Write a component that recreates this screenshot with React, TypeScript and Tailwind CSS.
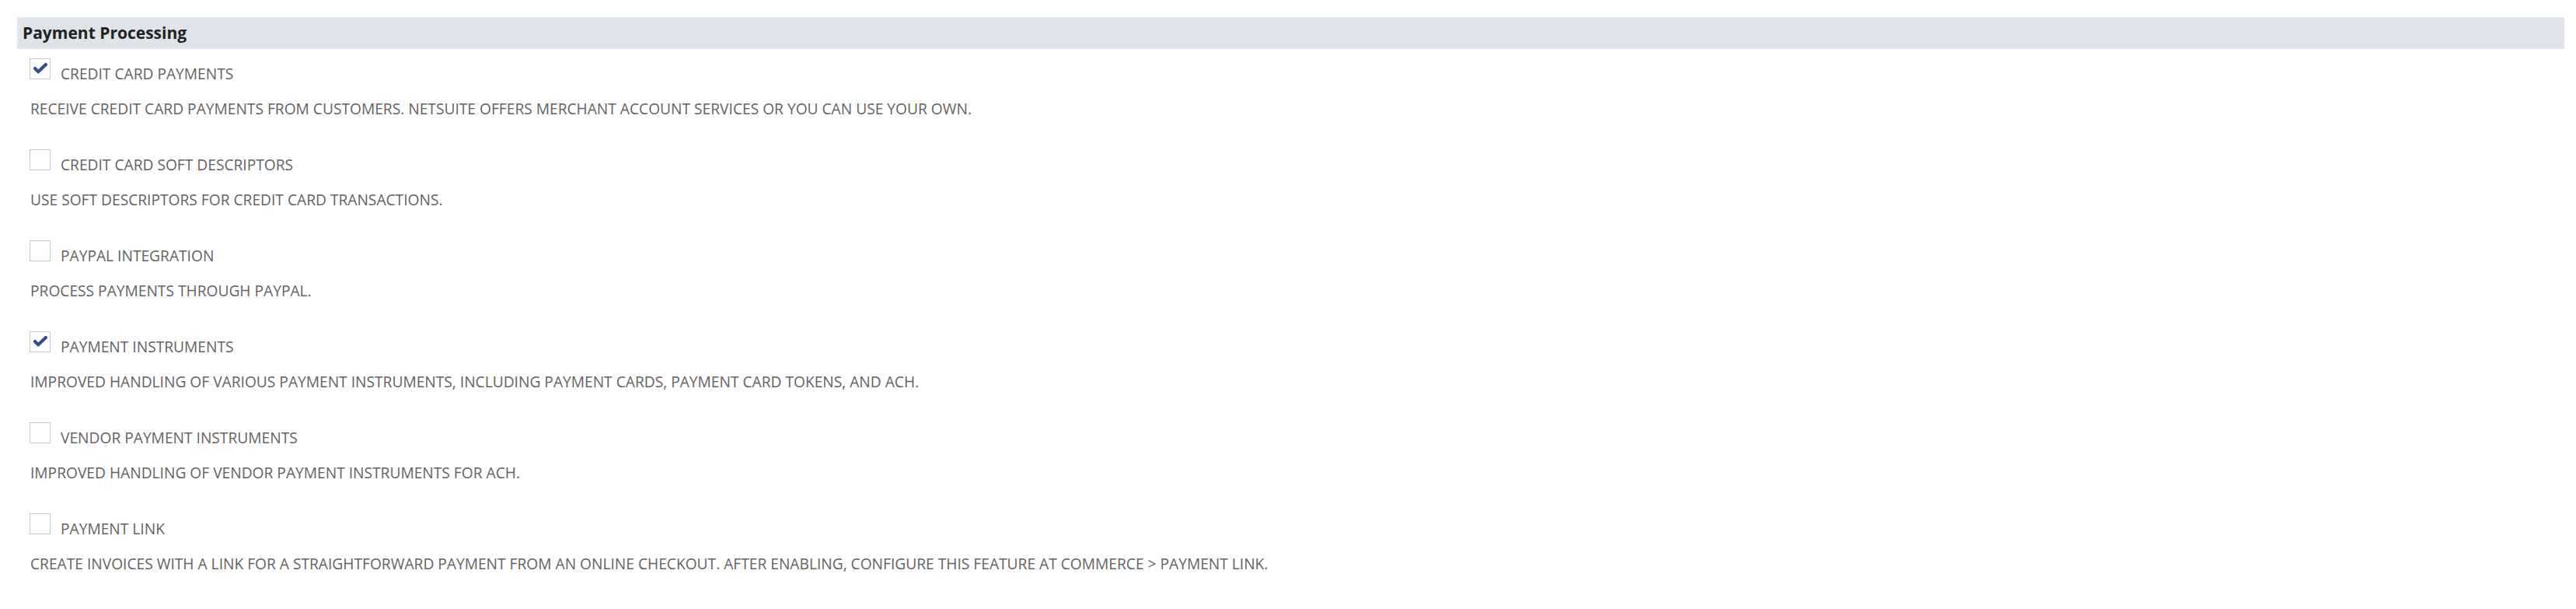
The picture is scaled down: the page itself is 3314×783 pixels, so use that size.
// Payment Processing feature list (NetSuite-style settings block)

const features = [
  {
    label: 'CREDIT CARD PAYMENTS',
    desc: 'RECEIVE CREDIT CARD PAYMENTS FROM CUSTOMERS. NETSUITE OFFERS MERCHANT ACCOUNT SERVICES OR YOU CAN USE YOUR OWN.',
    checked: true,
  },
  {
    label: 'CREDIT CARD SOFT DESCRIPTORS',
    desc: 'USE SOFT DESCRIPTORS FOR CREDIT CARD TRANSACTIONS.',
    checked: false,
  },
  {
    label: 'PAYPAL INTEGRATION',
    desc: 'PROCESS PAYMENTS THROUGH PAYPAL.',
    checked: false,
  },
  {
    label: 'PAYMENT INSTRUMENTS',
    desc: 'IMPROVED HANDLING OF VARIOUS PAYMENT INSTRUMENTS, INCLUDING PAYMENT CARDS, PAYMENT CARD TOKENS, AND ACH.',
    checked: true,
  },
  {
    label: 'VENDOR PAYMENT INSTRUMENTS',
    desc: 'IMPROVED HANDLING OF VENDOR PAYMENT INSTRUMENTS FOR ACH.',
    checked: false,
  },
  {
    label: 'PAYMENT LINK',
    desc: 'CREATE INVOICES WITH A LINK FOR A STRAIGHTFORWARD PAYMENT FROM AN ONLINE CHECKOUT. AFTER ENABLING, CONFIGURE THIS FEATURE AT COMMERCE > PAYMENT LINK.',
    checked: false,
  },
]

function Checkbox({ checked }: { checked: boolean }) {
  return (
    <div className="w-[27px] h-[27px] shrink-0 border border-[#c9c9c9] bg-white flex items-center justify-center">
      {checked && (
        <svg width="27" height="27" viewBox="0 0 27 27">
          <path d="M6.5 13 L11 17.5 L21.5 7.5" fill="none" stroke="#3a4c8e" strokeWidth="4.6" strokeLinecap="round" strokeLinejoin="round" />
        </svg>
      )}
    </div>
  )
}

export default function App() {
  return (
    <div className="min-h-[783px] bg-white pt-[22px] pl-[22px] pr-[15px]" style={{ fontFamily: '"Open Sans", "Liberation Sans", sans-serif' }}>
      {/* section header */}
      <div className="h-[41px] bg-[#dfe3ea] flex items-center pl-[7px]">
        <span className="text-[21px] font-bold text-[#222]">Payment Processing</span>
      </div>

      {/* feature rows */}
      <div className="flex flex-col gap-[39px] pt-[12px] pl-[16px]">
        {features.map((f) => (
          <div key={f.label}>
            <div className="flex items-start">
              <Checkbox checked={f.checked} />
              <span className="ml-[13px] mt-[7px] text-[19.2px] leading-[26px] text-[#636363]">{f.label}</span>
            </div>
            <p className="mt-[19px] ml-[1px] text-[19.2px] leading-[26px] text-[#636363]">{f.desc}</p>
          </div>
        ))}
      </div>
    </div>
  )
}
